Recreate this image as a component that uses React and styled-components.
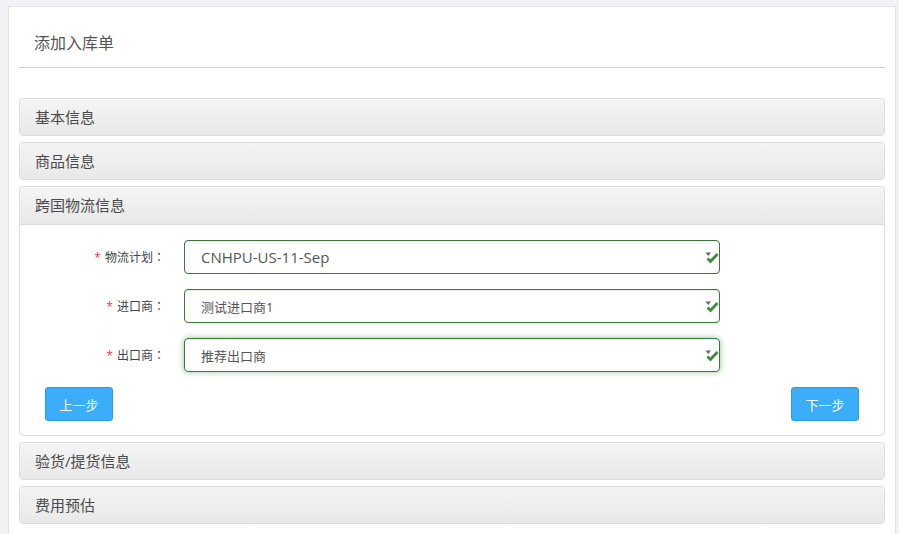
import React from 'react';
import styled, { createGlobalStyle } from 'styled-components';

const GlobalStyle = createGlobalStyle`
  html, body {
    margin: 0;
    padding: 0;
    background: #f2f2f6;
    font-family: "Open Sans", "Noto Sans CJK SC", sans-serif;
  }
  body {
    padding: 6px 3px 0 8px;
    overflow: hidden;
  }
  * {
    box-sizing: border-box;
  }
`;

const FONT = `"Open Sans", "Noto Sans CJK SC", sans-serif`;

const Card = styled.div`
  width: 888px;
  min-height: 600px;
  background: #fff;
  border: 1px solid #e4e4e8;
  padding: 0 10px;
`;

const Title = styled.h1`
  margin: 0;
  padding: 24px 0 12px 15px;
  font-size: 16px;
  line-height: 24px;
  font-weight: normal;
  color: #555;
  border-bottom: 1px solid #d2d2d2;
  font-family: ${FONT};
`;

const Panels = styled.div`
  display: flex;
  flex-direction: column;
  gap: 6px;
  margin-top: 30px;
`;

const Panel = styled.section`
  border: 1px solid #dcdcdc;
  border-radius: 4px;
  background: #fff;
  overflow: hidden;
`;

const PanelHeader = styled.div`
  height: ${p => (p.$open ? '38px' : '36px')};
  line-height: 37px;
  padding-left: 15px;
  font-size: 15px;
  color: #4a4a4a;
  background: linear-gradient(to bottom, #f5f5f5, #e8e8e8);
  border-bottom: ${p => (p.$open ? '1px solid #dcdcdc' : 'none')};
  font-family: ${FONT};
`;

const PanelBody = styled.div`
  padding: 15px 25px 14px 25px;
`;

const Rows = styled.div`
  display: flex;
  flex-direction: column;
  gap: 15px;
`;

const Row = styled.div`
  display: flex;
  align-items: center;
`;

const Label = styled.label`
  width: 120px;
  margin-right: 19px;
  text-align: right;
  font-size: 12px;
  color: #444;
  font-family: ${FONT};
`;

const Star = styled.span`
  color: #e8453c;
  margin-right: 4px;
`;

const Colon = styled.span`
  font-family: "Noto Sans CJK JP", sans-serif;
`;

const Field = styled.div`
  position: relative;
  width: 536px;
  height: 34px;
  border: 1px solid #3c763d;
  border-radius: 4px;
  padding-left: 16px;
  display: flex;
  align-items: center;
  font-size: ${p => (p.$latin ? '15px' : '13px')};
  color: #555;
  font-family: ${FONT};
  box-shadow: ${p =>
    p.$focus
      ? 'inset 0 1px 1px rgba(0,0,0,.075), 0 0 6px #8fc48f'
      : 'inset 0 1px 1px rgba(0,0,0,.075)'};
`;

const Check = styled.svg`
  position: absolute;
  right: 0px;
  top: 10px;
`;

const Actions = styled.div`
  display: flex;
  justify-content: space-between;
  margin-top: 15px;
`;

const Button = styled.button`
  width: 68px;
  height: 34px;
  border: 1px solid #2d9be8;
  border-radius: 3px;
  background: #3badfb;
  color: #fff;
  font-size: 13px;
  font-family: ${FONT};
  padding: 0;
`;

const CheckIcon = () => (
  <Check width="14" height="13" viewBox="0 0 14 13">
    <path d="M0.5 1.5 L6 1.5 L3.25 5 Z" fill="#666" />
    <path d="M2.5 7.5 L5.5 10.5 L12.5 3" fill="none" stroke="#3c8d3c" strokeWidth="2.8" />
  </Check>
);

const fields = [
  { label: '物流计划', value: 'CNHPU-US-11-Sep', latin: true },
  { label: '进口商', value: '测试进口商1' },
  { label: '出口商', value: '推荐出口商', focus: true },
];

const App = () => (
  <>
    <GlobalStyle />
    <Card>
      <Title>添加入库单</Title>
      <Panels>
        <Panel><PanelHeader>基本信息</PanelHeader></Panel>
        <Panel><PanelHeader>商品信息</PanelHeader></Panel>
        <Panel>
          <PanelHeader $open>跨国物流信息</PanelHeader>
          <PanelBody>
            <Rows>
              {fields.map(f => (
                <Row key={f.label}>
                  <Label><Star>*</Star>{f.label}<Colon>：</Colon></Label>
                  <Field $latin={f.latin} $focus={f.focus}>
                    {f.value}
                    <CheckIcon />
                  </Field>
                </Row>
              ))}
            </Rows>
            <Actions>
              <Button>上一步</Button>
              <Button>下一步</Button>
            </Actions>
          </PanelBody>
        </Panel>
        <Panel><PanelHeader>验货/提货信息</PanelHeader></Panel>
        <Panel><PanelHeader>费用预估</PanelHeader></Panel>
      </Panels>
    </Card>
  </>
);

export default App;
